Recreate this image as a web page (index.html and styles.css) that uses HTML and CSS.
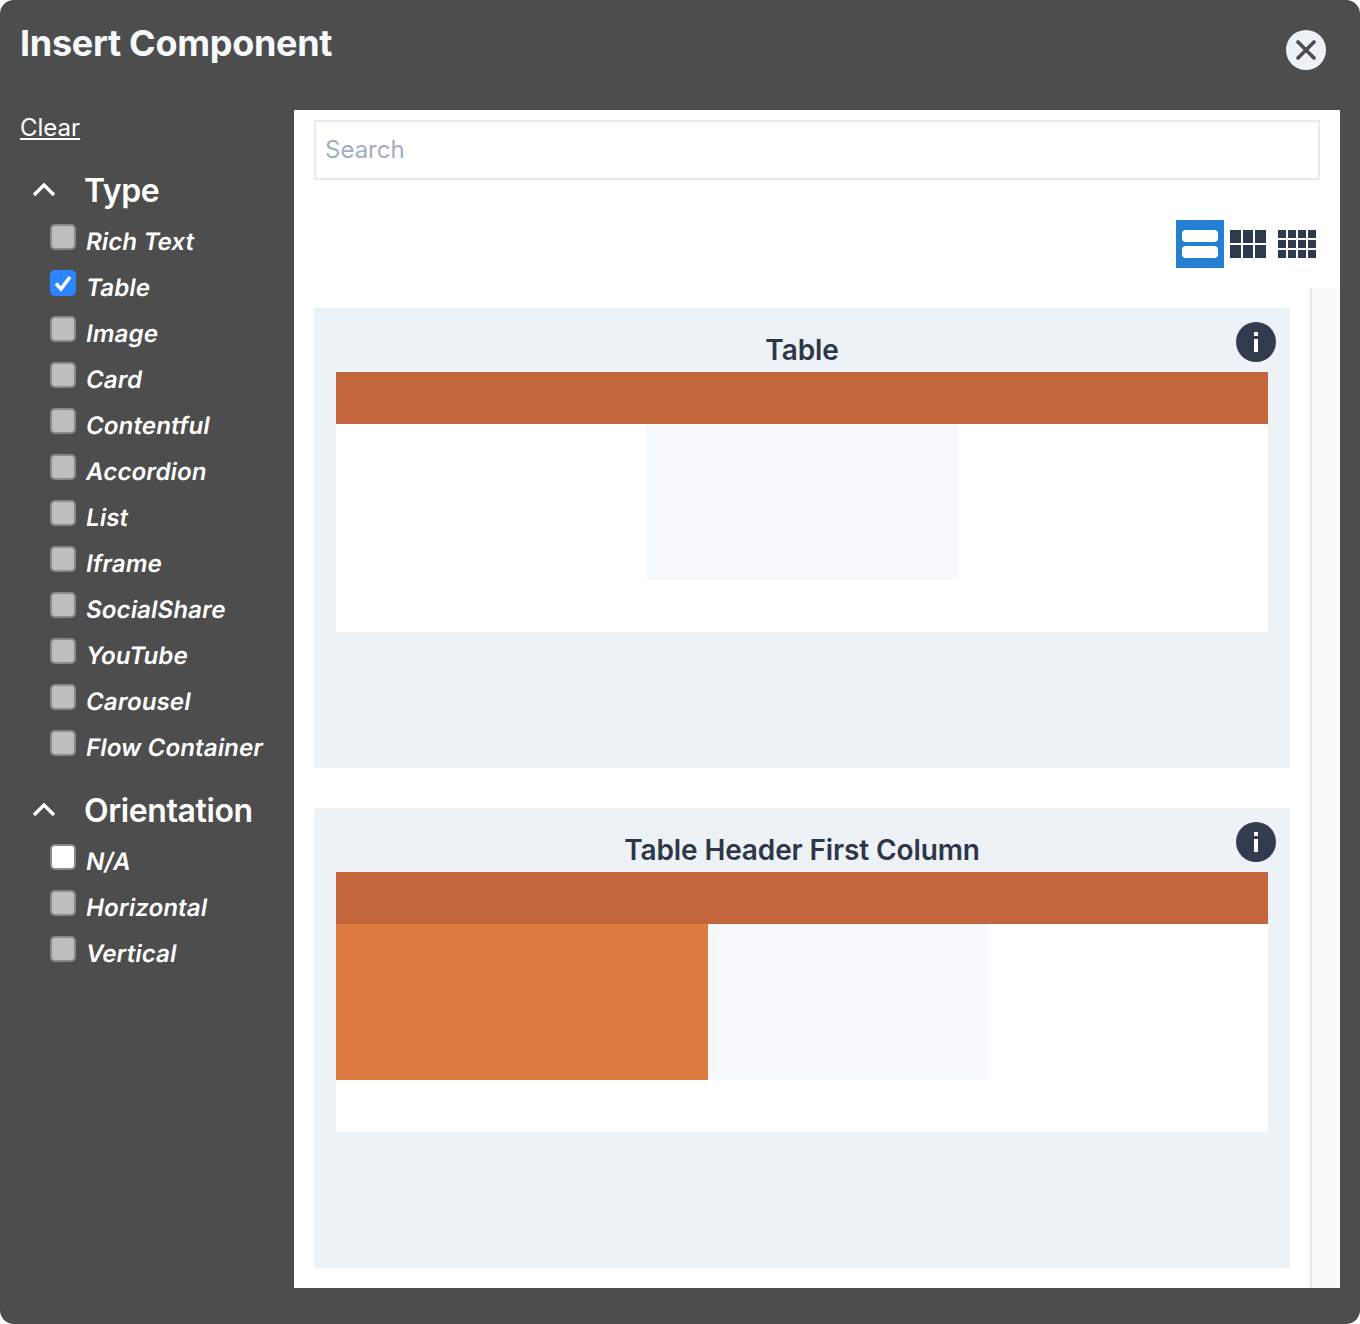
FILE: index.html
```html
<!DOCTYPE html>
<html lang="en">
<head>
    <meta charset="UTF-8">
    <title>Insert Component</title>
    <link rel="stylesheet" href="styles.css">
</head>
<body>

<div class="modal">
    <div class="modal-header">
        <h1 class="modal-title">Insert Component</h1>
        <button class="close-btn" type="button" aria-label="Close">
            <svg width="20" height="20" viewBox="0 0 20 20"><path d="M2 2 18 18M18 2 2 18" stroke="#4d4d4d" stroke-width="3.6" stroke-linecap="round"/></svg>
        </button>
    </div>

    <div class="modal-body">
        <div class="sidebar">
            <a class="clear-link" href="#">Clear</a>

            <div class="filter-title">
                <svg class="chevron" width="24" height="14" viewBox="0 0 24 14"><path d="M2 12 12 2 22 12" fill="none" stroke="#fff" stroke-width="3.4"/></svg>
                <span>Type</span>
            </div>
            <label class="filter-row"><span class="box"></span><span class="filter-text">Rich Text</span></label>
            <label class="filter-row"><span class="box box-checked"><svg width="20" height="18" viewBox="0 0 20 18"><path d="M3 9.5 8 15 17 3" fill="none" stroke="#fff" stroke-width="3.6"/></svg></span><span class="filter-text">Table</span></label>
            <label class="filter-row"><span class="box"></span><span class="filter-text">Image</span></label>
            <label class="filter-row"><span class="box"></span><span class="filter-text">Card</span></label>
            <label class="filter-row"><span class="box"></span><span class="filter-text">Contentful</span></label>
            <label class="filter-row"><span class="box"></span><span class="filter-text">Accordion</span></label>
            <label class="filter-row"><span class="box"></span><span class="filter-text">List</span></label>
            <label class="filter-row"><span class="box"></span><span class="filter-text">Iframe</span></label>
            <label class="filter-row"><span class="box"></span><span class="filter-text">SocialShare</span></label>
            <label class="filter-row"><span class="box"></span><span class="filter-text">YouTube</span></label>
            <label class="filter-row"><span class="box"></span><span class="filter-text">Carousel</span></label>
            <label class="filter-row"><span class="box"></span><span class="filter-text">Flow Container</span></label>

            <div class="filter-title filter-title-second">
                <svg class="chevron" width="24" height="14" viewBox="0 0 24 14"><path d="M2 12 12 2 22 12" fill="none" stroke="#fff" stroke-width="3.4"/></svg>
                <span>Orientation</span>
            </div>
            <label class="filter-row"><span class="box box-white"></span><span class="filter-text">N/A</span></label>
            <label class="filter-row"><span class="box"></span><span class="filter-text">Horizontal</span></label>
            <label class="filter-row"><span class="box"></span><span class="filter-text">Vertical</span></label>
        </div>

        <div class="panel">
            <div class="search-box">Search</div>

            <div class="view-switch">
                <div class="view-btn view-btn-active">
                    <span class="pill"></span>
                    <span class="pill"></span>
                </div>
                <div class="view-btn">
                    <div class="grid-icon grid-three">
                        <i></i><i></i><i></i><i></i><i></i><i></i>
                    </div>
                </div>
                <div class="view-btn">
                    <div class="grid-icon grid-four">
                        <i></i><i></i><i></i><i></i><i></i><i></i><i></i><i></i><i></i><i></i><i></i><i></i>
                    </div>
                </div>
            </div>

            <div class="scroll-area">
                <div class="card-list">
                    <div class="card">
                        <span class="info-btn"><svg width="6" height="20" viewBox="0 0 6 20"><path d="M1 0h4v4H1zM1 7h4v13H1z" fill="#fff"/></svg></span>
                        <h2 class="card-title">Table</h2>
                        <div class="preview">
                            <div class="preview-head"></div>
                            <div class="preview-row row-centered">
                                <div class="cell-light cell-wide"></div>
                            </div>
                        </div>
                    </div>
                    <div class="card">
                        <span class="info-btn"><svg width="6" height="20" viewBox="0 0 6 20"><path d="M1 0h4v4H1zM1 7h4v13H1z" fill="#fff"/></svg></span>
                        <h2 class="card-title">Table Header First Column</h2>
                        <div class="preview">
                            <div class="preview-head"></div>
                            <div class="preview-row">
                                <div class="cell-orange"></div>
                                <div class="cell-light cell-narrow"></div>
                            </div>
                        </div>
                    </div>
                </div>
                <div class="scroll-track"></div>
            </div>
        </div>
    </div>
</div>

</body>
</html>
```

FILE: styles.css
```css
* {
    box-sizing: border-box;
}
body {
    margin: 0;
    background-color: #fff;
    font-family: Inter, "Liberation Sans", sans-serif;
    font-variant-ligatures: none;
}
.modal {
    width: 1360px;
    height: 1324px;
    background-color: #4d4d4d;
    border-radius: 14px;
    padding: 0 20px 36px 0;
    display: flex;
    flex-direction: column;
}
.modal-header {
    height: 110px;
    display: flex;
    justify-content: space-between;
    align-items: flex-start;
    padding-left: 20px;
}
.modal-title {
    margin: 21px 0 0;
    font-size: 36px;
    line-height: 44px;
    font-weight: 700;
    letter-spacing: -0.3px;
    color: #f7fafc;
}
.close-btn {
    width: 40px;
    height: 40px;
    margin: 30px 14px 0 0;
    padding: 0;
    border: 0;
    border-radius: 50%;
    background-color: #edf2f7;
    display: flex;
    align-items: center;
    justify-content: center;
}
.modal-body {
    flex: 1;
    display: flex;
    min-height: 0;
}
.sidebar {
    width: 294px;
    flex-shrink: 0;
    padding-left: 20px;
    color: #fff;
}
.clear-link {
    display: block;
    width: max-content;
    margin-top: 2px;
    font-size: 24px;
    line-height: 32px;
    color: #fff;
}
.filter-title {
    display: flex;
    align-items: center;
    margin-top: 24px;
    margin-bottom: 12px;
    height: 44px;
    padding-left: 12px;
    font-size: 32px;
    font-weight: 600;
    letter-spacing: -0.4px;
}
.filter-title-second {
    margin-top: 12px;
}
.chevron {
    margin-right: 28px;
}
.filter-row {
    display: flex;
    height: 46px;
    padding-left: 30px;
    align-items: flex-start;
}
.box {
    width: 26px;
    height: 26px;
    flex-shrink: 0;
    background-color: #bdbdbd;
    border: 2px solid #8a8a8a;
    border-radius: 5px;
}
.box-white {
    background-color: #fff;
}
.box-checked {
    background-color: #2a85ff;
    border-color: #2a85ff;
    display: flex;
    align-items: center;
    justify-content: center;
}
/* the face in the reference is a sloped roman, so the f has no descender */
.filter-text {
    margin-left: 9px;
    margin-top: 2px;
    font-size: 24px;
    line-height: 32px;
    font-weight: 600;
    letter-spacing: 0.15px;
    white-space: nowrap;
    transform: skewX(-9.4deg);
    transform-origin: left 24px;
}
.panel {
    flex: 1;
    background-color: #fff;
    display: flex;
    flex-direction: column;
    min-width: 0;
}
.search-box {
    height: 60px;
    margin: 10px 20px 0;
    padding-left: 9px;
    border: 2px solid #e8eaef;
    font-size: 24px;
    line-height: 56px;
    color: #a0aec0;
}
.view-switch {
    height: 48px;
    margin-top: 40px;
    padding-right: 20px;
    display: flex;
    justify-content: flex-end;
}
.view-btn {
    width: 48px;
    height: 48px;
    display: flex;
    flex-direction: column;
    align-items: center;
    justify-content: center;
}
.view-btn-active {
    background-color: #2480d0;
    gap: 4px;
}
.pill {
    width: 36px;
    height: 12px;
    border-radius: 4px;
    background-color: #fff;
}
.grid-icon {
    display: grid;
    gap: 2px;
    height: 28px;
}
.grid-icon i {
    background-color: #2f3a4c;
}
.grid-three {
    width: 36px;
    grid-template-columns: repeat(3, 1fr);
    grid-template-rows: repeat(2, 1fr);
}
.grid-four {
    width: 38px;
    margin-left: 2px;
    grid-template-columns: repeat(4, 1fr);
    grid-template-rows: repeat(3, 1fr);
}
.scroll-area {
    flex: 1;
    margin-top: 20px;
    display: flex;
    min-height: 0;
}
.card-list {
    flex: 1;
    padding: 20px 20px 0;
    display: flex;
    flex-direction: column;
    gap: 40px;
}
.scroll-track {
    width: 30px;
    background-color: #fafafa;
    border-left: 2px solid #e8e8e8;
}
.card {
    position: relative;
    height: 460px;
    background-color: #edf2f7;
    padding: 22px 22px 0;
}
.card-title {
    margin: 0;
    height: 42px;
    text-align: center;
    font-size: 28px;
    line-height: 40px;
    font-weight: 600;
    letter-spacing: -0.12px;
    color: #2d3748;
}
.info-btn {
    position: absolute;
    top: 14px;
    right: 14px;
    width: 40px;
    height: 40px;
    border-radius: 50%;
    background-color: #323c4e;
    display: flex;
    align-items: center;
    justify-content: center;
}
.preview {
    height: 260px;
    background-color: #fff;
}
.preview-head {
    height: 52px;
    background-color: #c4663c;
}
.preview-row {
    height: 156px;
    display: flex;
}
.row-centered {
    justify-content: center;
}
.cell-light {
    background-color: #f7fafc;
}
.cell-wide {
    width: 312px;
}
.cell-narrow {
    width: 280px;
}
.cell-orange {
    width: 372px;
    background-color: #dd7a3f;
}
```
